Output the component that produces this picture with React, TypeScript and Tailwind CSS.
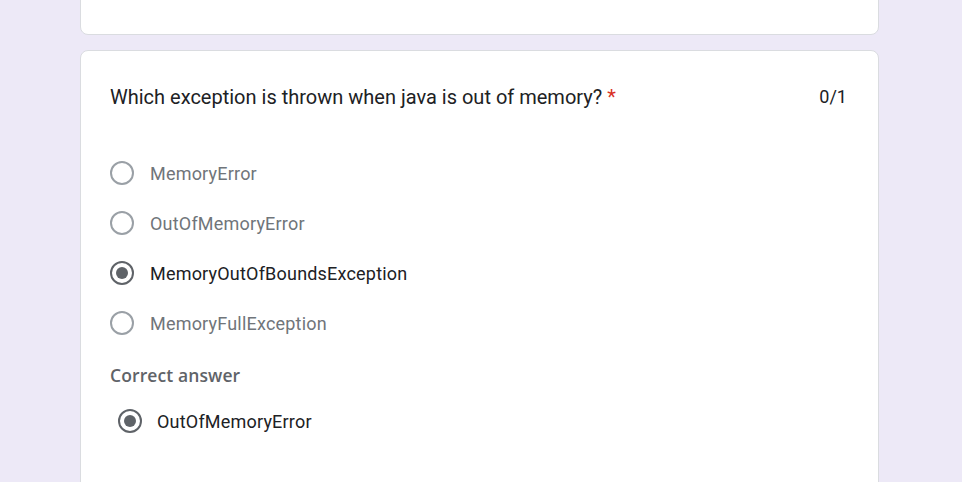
import React from "react";

const options = [
  { label: "MemoryError", checked: false },
  { label: "OutOfMemoryError", checked: false },
  { label: "MemoryOutOfBoundsException", checked: true },
  { label: "MemoryFullException", checked: false },
];

function Radio({ checked }: { checked: boolean }) {
  return (
    <div
      className={
        "w-[24px] h-[24px] rounded-full border-2 flex items-center justify-center shrink-0 " +
        (checked ? "border-[#5f6368]" : "border-[#9aa0a6]")
      }
    >
      {checked && <div className="w-[12px] h-[12px] rounded-full bg-[#5f6368]" />}
    </div>
  );
}

export default function App() {
  return (
    <div
      className="w-[962px] h-[482px] overflow-hidden bg-[#ede9f7] flex flex-col items-start"
      style={{ fontFamily: "Roboto, 'Liberation Sans', sans-serif" }}
    >
      <div className="ml-[80px] w-[799px] h-[51px] mt-[-16px] bg-white border border-[#dadce0] rounded-[8px] shrink-0" />
      <div className="ml-[80px] w-[799px] mt-[15px] bg-white border border-[#dadce0] rounded-[8px] shrink-0 pl-[29px] pr-[31px] pt-[34px] h-[500px]">
        <div className="flex items-start justify-between">
          <div className="text-[20px] leading-[24px] text-[#202124]">
            Which exception is thrown when java is out of memory? <span className="text-[#d93025]">*</span>
          </div>
          <div className="text-[18px] leading-[24px] text-[#202124]">0/1</div>
        </div>
        <div className="mt-[39px] flex flex-col">
          {options.map((o) => (
            <div key={o.label} className="flex items-center h-[50px] gap-[16px]">
              <Radio checked={o.checked} />
              <span
                className={
                  "text-[18px] tracking-[0.2px] " + (o.checked ? "text-[#202124]" : "text-[#70757a]")
                }
              >
                {o.label}
              </span>
            </div>
          ))}
        </div>
        <div
          className="mt-[15px] text-[17.5px] leading-[24px] font-semibold tracking-[0.1px] text-[#5f6368]"
          style={{ fontFamily: "'Open Sans', Roboto, sans-serif" }}
        >
          Correct answer
        </div>
        <div className="flex items-center gap-[15px] mt-[14px] pl-[8px] h-[40px]">
          <Radio checked />
          <span className="text-[18px] tracking-[0.2px] text-[#202124]">OutOfMemoryError</span>
        </div>
      </div>
    </div>
  );
}
